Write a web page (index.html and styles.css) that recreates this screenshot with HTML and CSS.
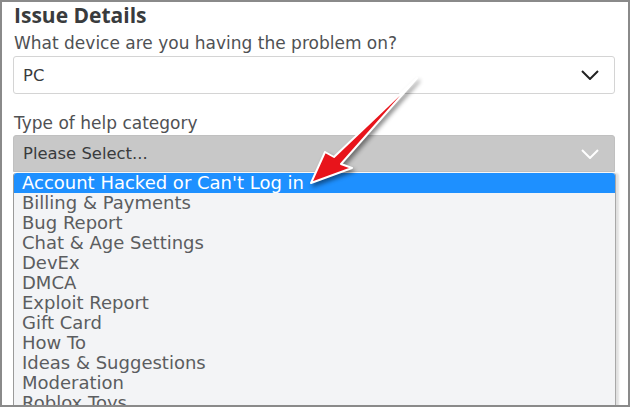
FILE: index.html
```html
<!DOCTYPE html>
<html lang="en">
<head>
    <meta charset="UTF-8">
    <meta name="viewport" content="width=device-width, initial-scale=1.0">
    <title>Issue Details</title>
    <link rel="stylesheet" href="styles.css">
</head>
<body>
    <div class="frame">
        <h2>Issue Details</h2>

        <label class="field-label">What device are you having the problem on?</label>
        <div class="select-box">
            <span>PC</span>
            <svg class="chevron" width="18" height="10" viewBox="0 0 18 10">
                <polyline points="1,1 9,9 17,1" fill="none" stroke="#222" stroke-width="2"/>
            </svg>
        </div>

        <label class="field-label second">Type of help category</label>
        <div class="select-box open">
            <span>Please Select...</span>
            <svg class="chevron" width="18" height="10" viewBox="0 0 18 10">
                <polyline points="1,1 9,9 17,1" fill="none" stroke="#fff" stroke-width="2"/>
            </svg>
        </div>

        <ul class="options">
            <li class="active">Account Hacked or Can't Log in</li>
            <li>Billing &amp; Payments</li>
            <li>Bug Report</li>
            <li>Chat &amp; Age Settings</li>
            <li>DevEx</li>
            <li>DMCA</li>
            <li>Exploit Report</li>
            <li>Gift Card</li>
            <li>How To</li>
            <li>Ideas &amp; Suggestions</li>
            <li>Moderation</li>
            <li>Roblox Toys</li>
        </ul>

        <!-- annotation arrow drawn over the screenshot -->
        <svg class="arrow" width="630" height="407" viewBox="0 0 630 407">
            <polygon points="311,183 325,152 334,157 417,78 341,164 352,168"
                     fill="#e8141b" stroke="#fff" stroke-width="2" stroke-linejoin="round"/>
        </svg>
    </div>
</body>
</html>
```

FILE: styles.css
```css
* {
    margin: 0;
    padding: 0;
    box-sizing: border-box;
}

body {
    font-family: "DejaVu Sans", Arial, sans-serif;
    background-color: #fff;
}

.frame {
    position: relative;
    width: 630px;
    height: 407px;
    border: 2px solid #8a8a8a;
    padding: 0 13px 0 11px;
    overflow: hidden;
    background-color: #fff;
}

h2 {
    font-family: "Open Sans", Arial, sans-serif;
    font-size: 21px;
    font-weight: 700;
    line-height: 26px;
    color: #393b3d;
    margin-left: 1px;
}

.field-label {
    display: block;
    font-size: 17px;
    line-height: 22px;
    color: #4f5154;
    margin: 4px 0 2px 1px;
}

.field-label.second {
    margin-top: 18px;
    margin-bottom: 1px;
}

.select-box {
    display: flex;
    justify-content: space-between;
    align-items: center;
    height: 38px;
    padding: 0 15px 0 9px;
    border: 1px solid #d4d4d4;
    border-radius: 3px;
    font-size: 16.4px;
    color: #393b3d;
}

.select-box.open {
    height: 37px;
    background-color: #c8c8c8;
    border-color: #c0c0c0;
    border-radius: 3px 3px 0 0;
}

.options {
    list-style: none;
    width: 603px;
    margin-top: 1px;
    background-color: #f3f4f6;
    border-left: 1px solid #9a9a9a;
    border-right: 1px solid #a8a8a8;
    box-shadow: 3px 0 2px rgba(0, 0, 0, 0.12);
    border-radius: 3px 3px 0 0;
}

.options li {
    height: 20px;
    line-height: 20px;
    padding-left: 8px;
    font-size: 18px;
    color: #5b5d60;
    white-space: nowrap;
}

.options li.active {
    background-color: #1e90ff;
    color: #fff;
    border-radius: 3px 3px 0 0;
}

.arrow {
    position: absolute;
    left: -2px;
    top: -2px;
    filter: drop-shadow(2px 3px 2px rgba(0, 0, 0, 0.45));
}
```
